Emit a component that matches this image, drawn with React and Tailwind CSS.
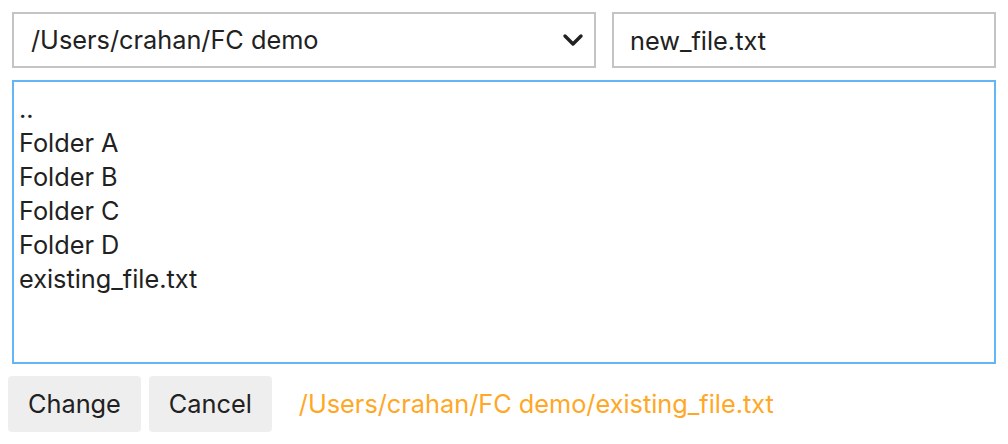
import React, { useState } from 'react';

const entries = ['..', 'Folder A', 'Folder B', 'Folder C', 'Folder D', 'existing_file.txt'];

const ChevronDown = () => (
  <svg width="24" height="24" viewBox="0 0 24 24" fill="none" stroke="currentColor" strokeWidth="3.4" strokeLinecap="round" strokeLinejoin="round">
    <path d="M4 8l8 8 8-8" />
  </svg>
);

const App = () => {
  const [fileName, setFileName] = useState('new_file.txt');

  return (
    <div className="w-[1008px] h-[444px] bg-white text-[#212121] font-['Inter','Noto_Sans',sans-serif] text-[25.3px]">
      <div className="flex gap-4 pt-3 pl-3 pr-3">
        {/* Directory picker */}
        <div className="w-[584px] h-14 border-2 border-[#c4c4c4] flex items-center justify-between pl-[17px] pr-[9px]">
          <span>/Users/crahan/FC demo</span>
          <ChevronDown />
        </div>
        <input
          value={fileName}
          onChange={(e) => setFileName(e.target.value)}
          className="w-[384px] h-14 border-2 border-[#c4c4c4] px-[16px] outline-none"
        />
      </div>

      {/* File list */}
      <div className="mx-3 mt-3 h-[284px] border-2 border-[#64b5f6] pl-[5px] pt-[10px]">
        {entries.map((e) => (
          <div key={e} className="leading-[34px]">{e}</div>
        ))}
      </div>

      {/* Actions */}
      <div className="flex items-center gap-2 pl-2 mt-3">
        <button className="h-14 px-[20px] bg-[#eeeeee] rounded-[4px]">Change</button>
        <button className="h-14 px-[20px] bg-[#eeeeee] rounded-[4px]">Cancel</button>
        <span className="ml-[19px] text-[#ffa726]">/Users/crahan/FC demo/existing_file.txt</span>
      </div>
    </div>
  );
};

export default App;
